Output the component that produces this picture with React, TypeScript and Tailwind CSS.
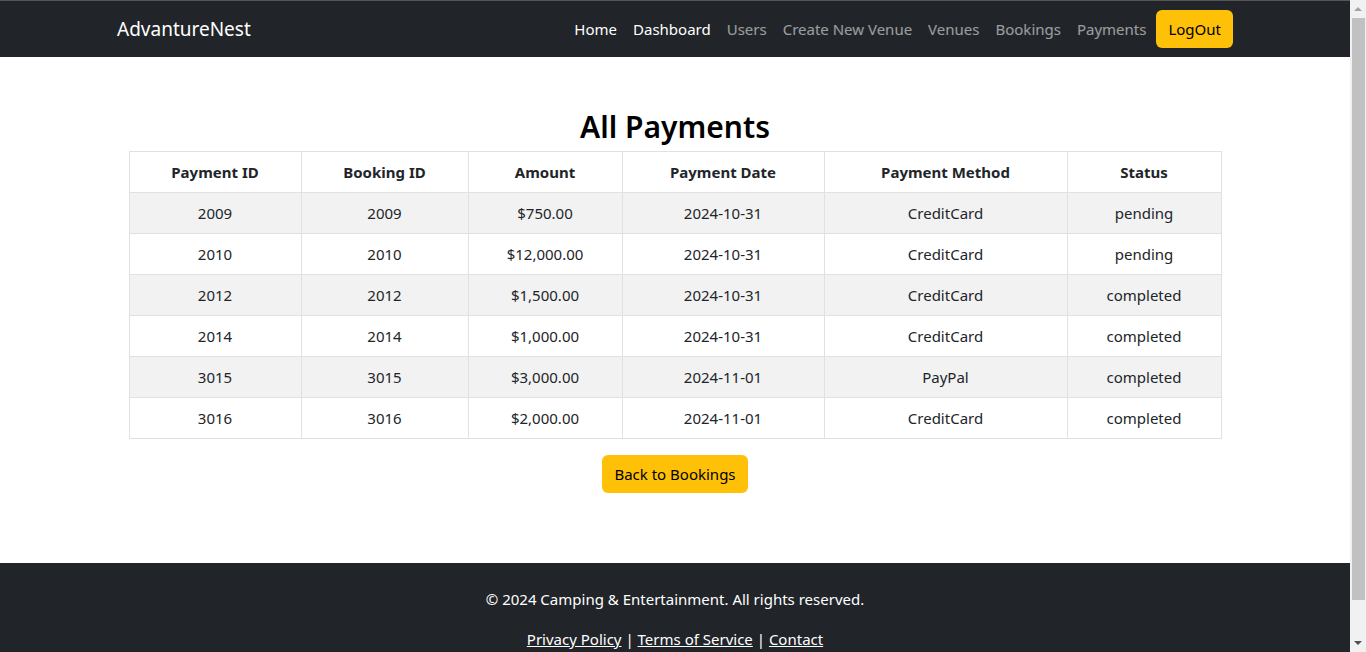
import React from 'react';

type Payment = {
  id: number;
  bookingId: number;
  amount: string;
  date: string;
  method: string;
  status: string;
};

const payments: Payment[] = [
  { id: 2009, bookingId: 2009, amount: '$750.00', date: '2024-10-31', method: 'CreditCard', status: 'pending' },
  { id: 2010, bookingId: 2010, amount: '$12,000.00', date: '2024-10-31', method: 'CreditCard', status: 'pending' },
  { id: 2012, bookingId: 2012, amount: '$1,500.00', date: '2024-10-31', method: 'CreditCard', status: 'completed' },
  { id: 2014, bookingId: 2014, amount: '$1,000.00', date: '2024-10-31', method: 'CreditCard', status: 'completed' },
  { id: 3015, bookingId: 3015, amount: '$3,000.00', date: '2024-11-01', method: 'PayPal', status: 'completed' },
  { id: 3016, bookingId: 3016, amount: '$2,000.00', date: '2024-11-01', method: 'CreditCard', status: 'completed' },
];

const navLinks = [
  { label: 'Home', active: true },
  { label: 'Dashboard', active: true },
  { label: 'Users', active: false },
  { label: 'Create New Venue', active: false },
  { label: 'Venues', active: false },
  { label: 'Bookings', active: false },
  { label: 'Payments', active: false },
];

const headers = ['Payment ID', 'Booking ID', 'Amount', 'Payment Date', 'Payment Method', 'Status'];
const colWidths = ['w-[172px]', 'w-[167px]', 'w-[154px]', 'w-[202px]', 'w-[243px]', 'w-[154px]'];

const Navbar = () => (
  <nav className="bg-[#212529] border-t border-[#555]">
    <div className="mx-auto w-[1140px] px-3 h-14 flex items-center justify-between">
      <a className="text-[19px] text-white">AdvantureNest</a>
      <ul className="flex items-center">
        {navLinks.map((link) => (
          <li key={link.label}>
            <a className={`px-2 text-[15px] leading-6 ${link.active ? 'text-white' : 'text-white/55'}`}>
              {link.label}
            </a>
          </li>
        ))}
        <li>
          <button className="bg-[#ffc107] text-black rounded-md px-3 h-[38px] text-[15px] ml-0.5">LogOut</button>
        </li>
      </ul>
    </div>
  </nav>
);

const PaymentsTable = () => (
  <table className="table-fixed border-collapse w-[1092px] mx-auto text-[#212529] text-[15px]">
    <colgroup>
      {colWidths.map((w, i) => (
        <col key={i} className={w} />
      ))}
    </colgroup>
    <thead>
      <tr>
        {headers.map((h) => (
          <th key={h} className="border border-[#dee2e6] h-[41px] px-2 font-bold text-center">
            {h}
          </th>
        ))}
      </tr>
    </thead>
    <tbody>
      {payments.map((p, i) => (
        <tr key={p.id} className={i % 2 === 0 ? 'bg-[#f2f2f2]' : 'bg-white'}>
          {[p.id, p.bookingId, p.amount, p.date, p.method, p.status].map((v, j) => (
            <td key={j} className="border border-[#dee2e6] h-[41px] px-2 text-center">
              {v}
            </td>
          ))}
        </tr>
      ))}
    </tbody>
  </table>
);

// stand-in for the browser's scrollbar seen in the screenshot
const Scrollbar = () => (
  <div className="w-4 shrink-0 bg-[#f1f1f1] flex flex-col items-center">
    <div className="h-[18px] flex items-center justify-center">
      <div className="w-0 h-0 border-x-4 border-x-transparent border-b-4 border-b-[#a3a3a3]" />
    </div>
    <div className="w-[13px] h-[582px] bg-[#c1c1c1] ml-px" />
    <div className="flex-1 flex items-end justify-center pb-[7px]">
      <div className="w-0 h-0 border-x-4 border-x-transparent border-t-4 border-t-[#505050]" />
    </div>
  </div>
);

export default function App() {
  return (
    <div className="font-['Noto_Sans',sans-serif] bg-white h-[652px] overflow-hidden flex">
      <div className="flex-1 flex flex-col">
        <Navbar />
        <main className="pt-[52px] pb-[70px] flex flex-col items-center">
          <h2 className="text-[30px] leading-[36px] font-semibold text-black mb-[6px]">All Payments</h2>
          <PaymentsTable />
          <button className="mt-4 bg-[#ffc107] text-black rounded-md px-3 h-[38px] text-[15px]">
            Back to Bookings
          </button>
        </main>
        <footer className="bg-[#212529] text-white text-center pt-6 pb-6 text-[15px]">
          <p className="mb-4 leading-6">© 2024 Camping &amp; Entertainment. All rights reserved.</p>
          <p className="leading-6">
            <a className="underline">Privacy Policy</a> | <a className="underline">Terms of Service</a> |{' '}
            <a className="underline">Contact</a>
          </p>
        </footer>
      </div>
      <Scrollbar />
    </div>
  );
}
